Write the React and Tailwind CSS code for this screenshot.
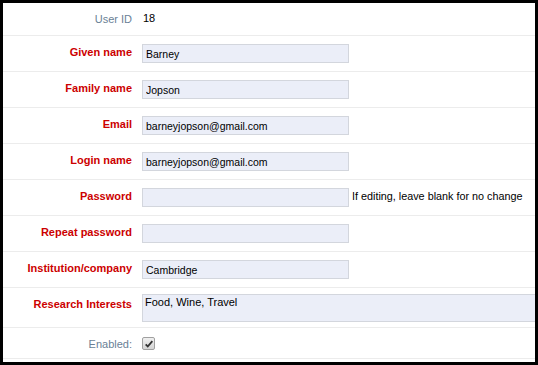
const Label = ({ children, muted = false }) => (
  <div
    className={`w-[129px] shrink-0 pt-[10px] text-right text-[11px] leading-[13px] ${
      muted ? "font-normal text-[#6a7f96]" : "font-bold text-[#cc0000]"
    }`}
  >
    {children}
  </div>
);

const Field = ({ value = "", type = "text" }) => (
  <input
    type={type}
    defaultValue={value}
    className="h-[19px] w-[207px] border border-[#d3d6dd] bg-[#ebeef8] px-[3px] text-[10.5px] text-black outline-none"
  />
);

const Row = ({ label, children, className = "h-[36px]" }) => (
  <div className={`flex items-start border-b border-[#ececec] ${className}`}>
    <Label>{label}</Label>
    <div className="flex items-center pl-[10px] pt-[8px]">{children}</div>
  </div>
);

const Checkbox = () => (
  <div className="flex h-[13px] w-[13px] items-center justify-center rounded-[2px] border border-[#a0a0a0] bg-gradient-to-b from-[#f0f0f0] to-[#d4d4d4]">
    <svg viewBox="0 0 12 12" className="h-[10px] w-[10px]" aria-hidden="true">
      <path d="M2 6.5l2.5 2.5L10 2.5" fill="none" stroke="#333" strokeWidth="2.2" />
    </svg>
  </div>
);

export default function App() {
  return (
    <div className="h-[365px] w-[538px] overflow-hidden border-[3px] border-black bg-white font-['Liberation_Sans',Arial,sans-serif]">
      {/* user id */}
      <div className="flex h-[33px] items-start border-b border-[#ececec]">
        <Label muted>User ID</Label>
        <div className="pl-[11px] pt-[9px] text-[11px] leading-[13px] text-black">18</div>
      </div>

      <Row label="Given name">
        <Field value="Barney" />
      </Row>
      <Row label="Family name">
        <Field value="Jopson" />
      </Row>
      <Row label="Email">
        <Field value="barneyjopson@gmail.com" />
      </Row>
      <Row label="Login name">
        <Field value="barneyjopson@gmail.com" />
      </Row>
      <Row label="Password">
        <Field type="password" />
        <span className="ml-[3px] -mt-[3px] text-[10.8px] text-black">
          If editing, leave blank for no change
        </span>
      </Row>
      <Row label="Repeat password">
        <Field type="password" />
      </Row>
      <Row label="Institution/company">
        <Field value="Cambridge" />
      </Row>

      {/* research interests */}
      <div className="flex h-[40px] items-start border-b border-[#ececec]">
        <Label>Research Interests</Label>
        <div className="pl-[10px] pt-[6px]">
          <textarea
            defaultValue="Food, Wine, Travel"
            className="block h-[28px] w-[420px] resize-none border border-[#d3d6dd] bg-[#ebeef8] px-[2px] pt-[1px] text-[11px] leading-[13px] text-black outline-none"
          />
        </div>
      </div>

      {/* enabled */}
      <div className="flex h-[31px] items-start border-b border-[#ececec]">
        <Label muted>Enabled:</Label>
        <div className="pl-[10px] pt-[9px]">
          <Checkbox />
        </div>
      </div>
    </div>
  );
}
